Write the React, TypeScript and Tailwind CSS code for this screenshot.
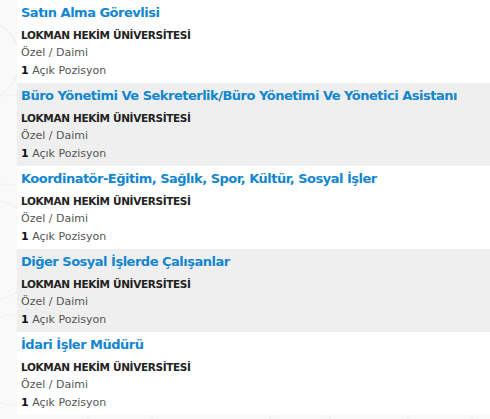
import React from 'react'

const JOBS = [
  'Satın Alma Görevlisi',
  'Büro Yönetimi Ve Sekreterlik/Büro Yönetimi Ve Yönetici Asistanı',
  'Koordinatör-Eğitim, Sağlık, Spor, Kültür, Sosyal İşler',
  'Diğer Sosyal İşlerde Çalışanlar',
  'İdari İşler Müdürü',
]

function Backdrop() {
  // faint swirl pattern behind the list
  return (
    <svg className="absolute inset-0 h-full w-full" viewBox="0 0 490 419" preserveAspectRatio="none">
      <g fill="none" stroke="#f0f0f0" strokeWidth="1.2">
        <circle cx="-20" cy="60" r="40" />
        <circle cx="10" cy="140" r="45" />
        <circle cx="-10" cy="250" r="50" />
        <circle cx="15" cy="360" r="45" />
        <circle cx="120" cy="450" r="45" />
        <circle cx="300" cy="445" r="40" />
        <circle cx="440" cy="450" r="45" />
      </g>
    </svg>
  )
}

export default function App() {
  return (
    <div className="relative h-[419px] w-[490px] overflow-hidden bg-[#f9f9f9] font-['DejaVu_Sans',Verdana,sans-serif]">
      <Backdrop />
      <ul className="relative ml-[17px]">
        {JOBS.map((title, i) => (
          <li key={i} className={`h-[83px] px-1 ${i % 2 ? 'bg-[#efefef]' : 'bg-white'}`}>
            <a className="block whitespace-nowrap text-[13px] font-bold leading-[26px] tracking-[-0.5px] text-[#1286cf]">
              {title}
            </a>
            <p className="whitespace-nowrap text-[10.5px] font-bold leading-[18px] tracking-[-0.35px] text-[#222]">
              LOKMAN HEKİM ÜNİVERSİTESİ
            </p>
            <p className="text-[11px] leading-[18px] text-[#555]">Özel / Daimi</p>
            <p className="text-[11px] leading-[18px] text-[#555]">
              <b className="text-[#111]">1</b> Açık Pozisyon
            </p>
          </li>
        ))}
      </ul>
    </div>
  )
}
